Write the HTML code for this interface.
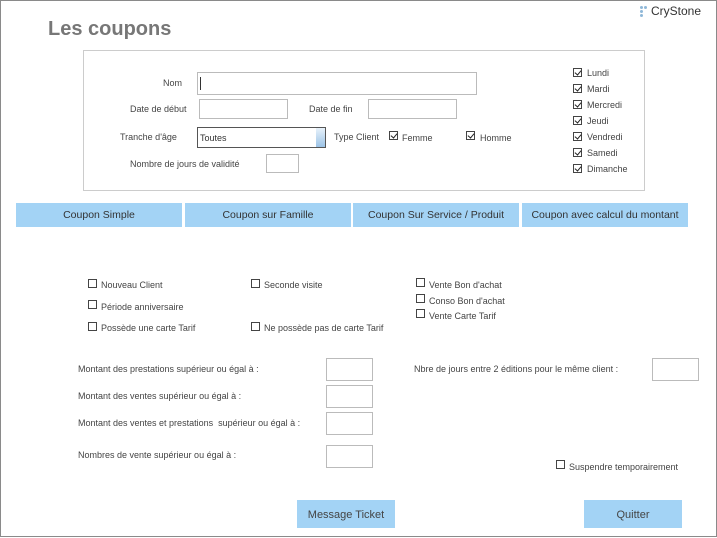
<!DOCTYPE html>
<html><head><meta charset="utf-8"><style>
*{margin:0;padding:0;box-sizing:border-box}
body{width:717px;height:538px;position:relative;background:#fff;font-family:"Liberation Sans",sans-serif;color:#333;overflow:hidden}
.frame{position:absolute;left:0;top:0;width:717px;height:537px;border:1px solid #8a8a8a}
.a{position:absolute;white-space:nowrap}
.t{font-size:9px;color:#444}
.in{position:absolute;border:1px solid #bbb;background:#fff}
.cb{position:absolute;width:9px;height:9px;border:1px solid #444;background:#fff}
.cb.k::after{content:"";position:absolute;left:2px;top:0px;width:3px;height:5px;border:solid #222;border-width:0 1.5px 1.5px 0;transform:rotate(40deg)}
.tab{position:absolute;top:203px;height:24px;background:#a3d3f5;font-size:10.5px;color:#333;text-align:center;line-height:24px}
.btn{position:absolute;top:500px;height:28px;background:#a3d3f5;font-size:11px;color:#444;text-align:center;line-height:30px}
.dot{position:absolute;width:3px;height:3px;border-radius:50%;background:#8fb8d8}
</style></head><body>
<div class="frame"></div>
<div class="dot" style="left:640px;top:6px"></div><div class="dot" style="left:644px;top:6px"></div>
<div class="dot" style="left:640px;top:10px"></div><div class="dot" style="left:640px;top:14px"></div>
<div class="a" style="left:651px;top:4px;font-size:12px;color:#333">CryStone</div>
<div class="a" style="left:48px;top:18px;font-size:20px;font-weight:bold;color:#777">Les coupons</div>
<div class="a" style="left:83px;top:50px;width:562px;height:141px;border:1px solid #ccc"></div>
<div class="a t" style="left:163px;top:78px">Nom</div>
<div class="in" style="left:197px;top:72px;width:280px;height:23px"></div>
<div class="a" style="left:200px;top:77px;width:1px;height:13px;background:#333"></div>
<div class="a t" style="left:130px;top:104px">Date de début</div>
<div class="in" style="left:199px;top:99px;width:89px;height:20px"></div>
<div class="a t" style="left:309px;top:104px">Date de fin</div>
<div class="in" style="left:368px;top:99px;width:89px;height:20px"></div>
<div class="a t" style="left:120px;top:132px">Tranche d'âge</div>
<div class="in" style="left:197px;top:127px;width:129px;height:21px;border-color:#555"></div>
<div class="a" style="left:316px;top:128px;width:9px;height:19px;background:linear-gradient(#e8f2fb,#9cc3e6)"></div>
<div class="a t" style="left:200px;top:133px;color:#333">Toutes</div>
<div class="a t" style="left:334px;top:132px">Type Client</div>
<div class="cb k" style="left:389px;top:131px"></div><div class="a t" style="left:402px;top:133px">Femme</div>
<div class="cb k" style="left:466px;top:131px"></div><div class="a t" style="left:480px;top:133px">Homme</div>
<div class="a t" style="left:130px;top:159px">Nombre de jours de validité</div>
<div class="in" style="left:266px;top:154px;width:33px;height:19px"></div>
<div class="cb k" style="left:573px;top:68px"></div><div class="a t" style="left:587px;top:68px">Lundi</div>
<div class="cb k" style="left:573px;top:84px"></div><div class="a t" style="left:587px;top:84px">Mardi</div>
<div class="cb k" style="left:573px;top:100px"></div><div class="a t" style="left:587px;top:100px">Mercredi</div>
<div class="cb k" style="left:573px;top:116px"></div><div class="a t" style="left:587px;top:116px">Jeudi</div>
<div class="cb k" style="left:573px;top:132px"></div><div class="a t" style="left:587px;top:132px">Vendredi</div>
<div class="cb k" style="left:573px;top:148px"></div><div class="a t" style="left:587px;top:148px">Samedi</div>
<div class="cb k" style="left:573px;top:164px"></div><div class="a t" style="left:587px;top:164px">Dimanche</div>
<div class="tab" style="left:16px;width:166px">Coupon Simple</div>
<div class="tab" style="left:185px;width:166px">Coupon sur Famille</div>
<div class="tab" style="left:353px;width:166px">Coupon Sur Service / Produit</div>
<div class="tab" style="left:522px;width:166px">Coupon avec calcul du montant</div>
<div class="cb" style="left:88px;top:279px"></div><div class="a t" style="left:101px;top:280px">Nouveau Client</div>
<div class="cb" style="left:88px;top:300px"></div><div class="a t" style="left:101px;top:302px">Période anniversaire</div>
<div class="cb" style="left:88px;top:322px"></div><div class="a t" style="left:101px;top:323px">Possède une carte Tarif</div>
<div class="cb" style="left:251px;top:279px"></div><div class="a t" style="left:264px;top:280px">Seconde visite</div>
<div class="cb" style="left:251px;top:322px"></div><div class="a t" style="left:264px;top:323px">Ne possède pas de carte Tarif</div>
<div class="cb" style="left:416px;top:278px"></div><div class="a t" style="left:429px;top:280px">Vente Bon d'achat</div>
<div class="cb" style="left:416px;top:294px"></div><div class="a t" style="left:429px;top:296px">Conso Bon d'achat</div>
<div class="cb" style="left:416px;top:309px"></div><div class="a t" style="left:429px;top:311px">Vente Carte Tarif</div>
<div class="a t" style="left:78px;top:364px">Montant des prestations supérieur ou égal à :</div>
<div class="in" style="left:326px;top:358px;width:47px;height:23px"></div>
<div class="a t" style="left:78px;top:391px">Montant des ventes supérieur ou égal à :</div>
<div class="in" style="left:326px;top:385px;width:47px;height:23px"></div>
<div class="a t" style="left:78px;top:418px">Montant des ventes et prestations&nbsp; supérieur ou égal à :</div>
<div class="in" style="left:326px;top:412px;width:47px;height:23px"></div>
<div class="a t" style="left:78px;top:450px">Nombres de vente supérieur ou égal à :</div>
<div class="in" style="left:326px;top:445px;width:47px;height:23px"></div>
<div class="a t" style="left:414px;top:364px">Nbre de jours entre 2 éditions pour le même client :</div>
<div class="in" style="left:652px;top:358px;width:47px;height:23px"></div>
<div class="cb" style="left:556px;top:460px"></div><div class="a t" style="left:569px;top:462px">Suspendre temporairement</div>
<div class="btn" style="left:297px;width:98px">Message Ticket</div>
<div class="btn" style="left:584px;width:98px">Quitter</div>
</body></html>
